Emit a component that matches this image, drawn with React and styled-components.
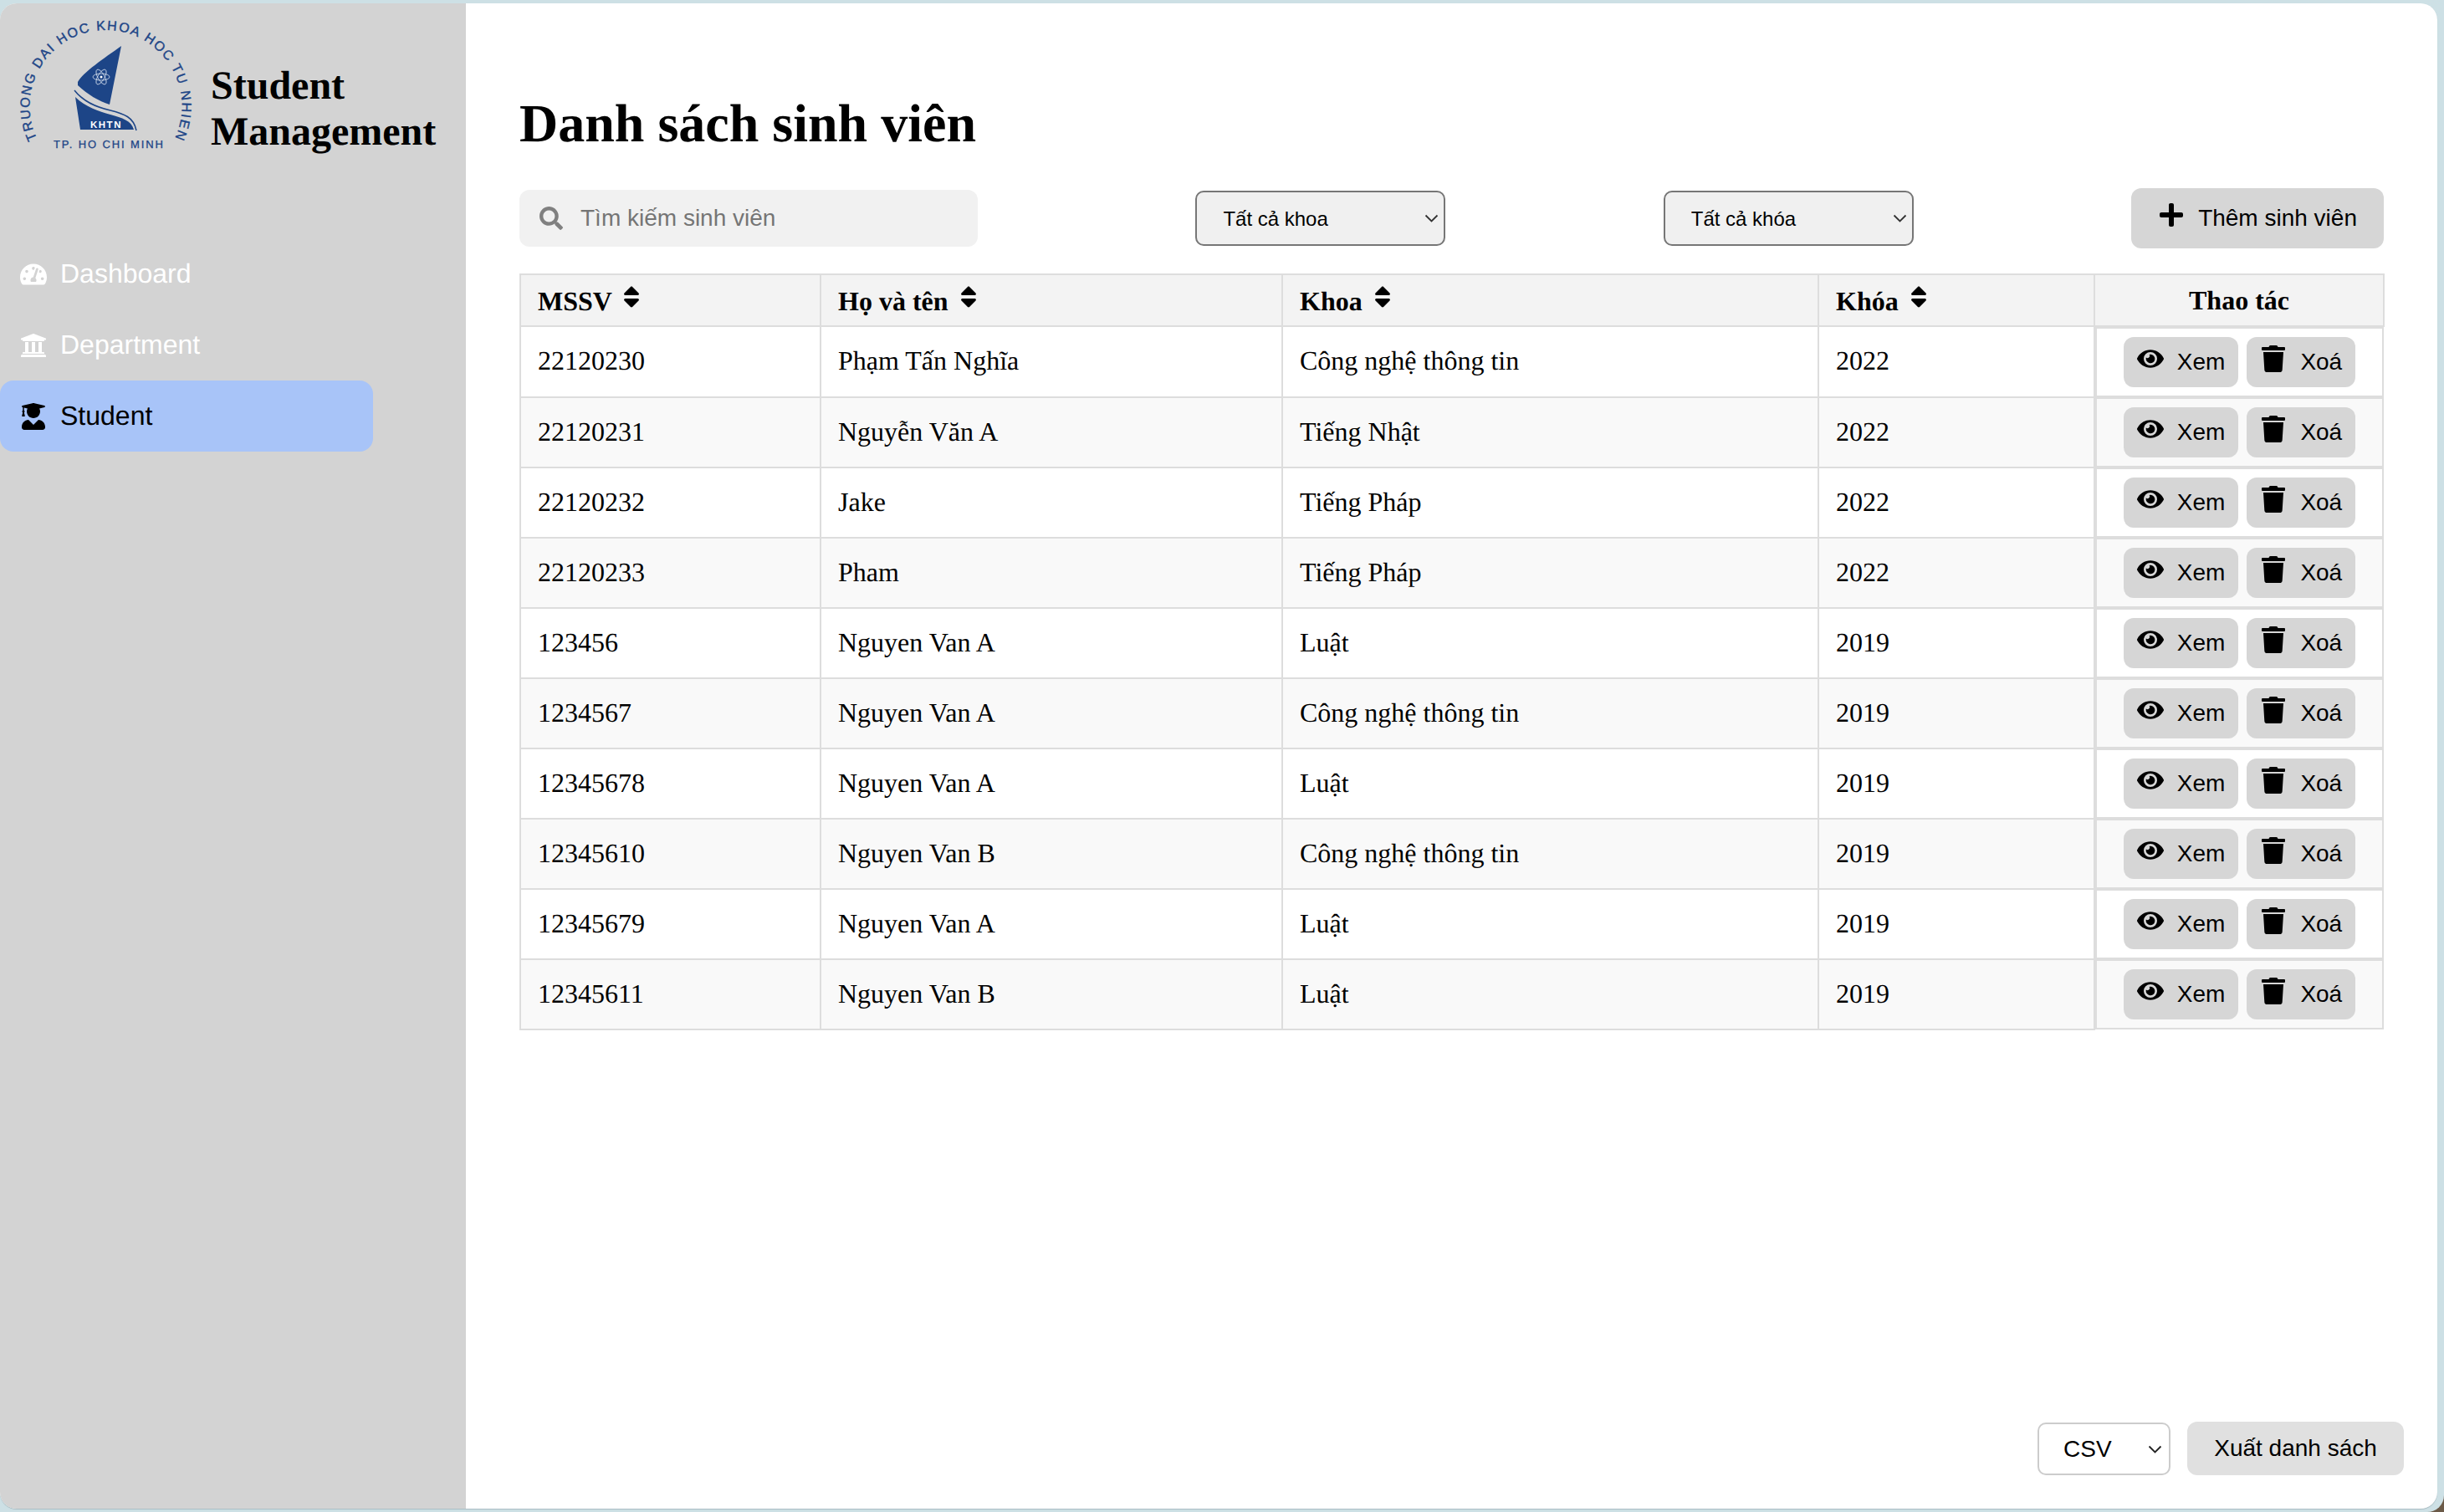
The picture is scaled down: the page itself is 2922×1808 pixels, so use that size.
import React from 'react';
import styled, { createGlobalStyle } from 'styled-components';
import {
  FaTachometerAlt,
  FaUniversity,
  FaUserGraduate,
  FaSearch,
  FaPlus,
  FaSort,
  FaEye,
  FaTrash,
} from 'react-icons/fa';

const chevron = (color) =>
  `url("data:image/svg+xml,%3Csvg xmlns='http://www.w3.org/2000/svg' width='17' height='10' viewBox='0 0 17 10'%3E%3Cpath d='M1.5 1.5 8.5 8.5 15.5 1.5' fill='none' stroke='${color}' stroke-width='1.8'/%3E%3C/svg%3E")`;

const GlobalStyle = createGlobalStyle`
  html, body {
    margin: 0;
    background: #6b5a48;
  }
  * {
    box-sizing: border-box;
  }
`;

const Frame = styled.div`
  height: 100vh;
  padding: 4px 8px 4px 0;
  background: #cde0e5;
  border-bottom-right-radius: 20px;
  font-family: "Liberation Sans", Arial, sans-serif;
  text-rendering: geometricPrecision;
`;

const Window = styled.div`
  display: flex;
  height: 100%;
  background: #fff;
  border-radius: 20px;
  overflow: hidden;
  box-shadow: 0 1px 1px #a9bcc2;
`;

const Sidebar = styled.aside`
  flex: 0 0 557px;
  background: #d3d3d3;
`;

const Brand = styled.div`
  display: flex;
  align-items: flex-start;
  gap: 12px;
  height: 281px;
  padding: 6px 0 0 10px;
`;

const BrandName = styled.div`
  margin-top: 65px;
  font-family: "Liberation Serif", "Times New Roman", serif;
  font-size: 48px;
  font-weight: bold;
  color: #000;
`;

const Nav = styled.nav`
  display: flex;
  flex-direction: column;
`;

const NavItem = styled.a`
  display: flex;
  align-items: center;
  gap: 16px;
  width: 446px;
  height: 85px;
  padding-left: 24px;
  border-radius: 16px;
  font-size: 32px;
  color: ${(p) => (p.$active ? '#000' : '#fff')};
  background: ${(p) => (p.$active ? '#a8c4f8' : 'transparent')};
`;

const Main = styled.main`
  flex: 1;
  display: flex;
  flex-direction: column;
  min-width: 0;
`;

const Content = styled.div`
  padding: 107px 64px 0;
`;

const Title = styled.h1`
  margin: 0 0 40px;
  font-family: "Liberation Serif", "Times New Roman", serif;
  font-size: 64px;
  font-weight: bold;
  color: #000;
`;

const Toolbar = styled.div`
  display: flex;
  justify-content: space-between;
  align-items: center;
  height: 72px;
  margin-bottom: 30px;
`;

const SearchBox = styled.label`
  display: flex;
  align-items: center;
  gap: 21px;
  width: 548px;
  height: 68px;
  padding-left: 24px;
  border-radius: 12px;
  background: #f1f1f1;
  color: #808080;
  font-size: 28px;
`;

const SearchInput = styled.input`
  flex: 1;
  min-width: 0;
  padding: 0;
  border: none;
  outline: none;
  background: transparent;
  font-family: inherit;
  font-size: 28px;

  &::placeholder {
    color: #757575;
  }
`;

const FilterSelect = styled.select`
  appearance: none;
  width: 299px;
  height: 66px;
  padding-left: 31px;
  border: 2px solid #767676;
  border-radius: 10px;
  background: #f0f0f0 ${chevron('%23333')} no-repeat right 6px center;
  font-family: inherit;
  font-size: 24px;
  color: #000;
`;

const AddButton = styled.button`
  display: flex;
  align-items: center;
  gap: 16px;
  height: 72px;
  padding: 0 32px;
  border: none;
  border-radius: 12px;
  background: #d6d6d6;
  font-family: inherit;
  font-size: 28px;
  color: #000;
`;

const ButtonIcon = styled.span`
  display: flex;
  margin-bottom: 8px;
  font-size: 32px;
`;

const Table = styled.table`
  width: calc(100% - 1px);
  table-layout: fixed;
  border-collapse: collapse;
  font-family: "Liberation Serif", "Times New Roman", serif;
  font-size: 32px;
  color: #000;
`;

const Th = styled.th`
  width: ${(p) => p.$width}px;
  padding: 10px 20px;
  border: 2px solid #ddd;
  background: #f3f3f3;
  text-align: ${(p) => (p.$center ? 'center' : 'left')};

  svg {
    font-size: 32px;
  }
`;

const Row = styled.tr`
  background: ${(p) => (p.$even ? '#f9f9f9' : '#fff')};
`;

const Td = styled.td`
  padding: 0 20px 2px;
  border: 2px solid #ddd;
`;

const ActionCell = styled.td`
  display: flex;
  justify-content: center;
  gap: 10px;
  padding: 10px;
  border: 2px solid #ddd;
`;

const ActionButton = styled.button`
  display: flex;
  align-items: center;
  gap: 16px;
  height: 60px;
  padding: 0 16px;
  border: none;
  border-radius: 12px;
  background: #d6d6d6;
  font-family: "Liberation Sans", Arial, sans-serif;
  font-size: 28px;
  color: #000;
`;

const Footer = styled.div`
  display: flex;
  justify-content: flex-end;
  align-items: flex-end;
  gap: 20px;
  margin-top: auto;
  padding: 0 40px 40px 0;
`;

const FormatSelect = styled.select`
  appearance: none;
  width: 159px;
  height: 63px;
  padding-left: 29px;
  border: 2px solid #ccc;
  border-radius: 10px;
  background: #fff ${chevron('%23222')} no-repeat right 8px center;
  font-family: inherit;
  font-size: 28px;
  color: #000;
`;

const ExportButton = styled.button`
  width: 259px;
  height: 64px;
  border: none;
  border-radius: 12px;
  background: #e0e0e0;
  font-family: inherit;
  font-size: 28px;
  color: #000;
`;

const Logo = () => (
  <svg width="230" height="180" viewBox="0 0 230 180" fill="#1d4587" fontFamily="Liberation Sans, Arial, sans-serif">
    <defs>
      <path id="logo-arc" d="M34.3 156 A91 91 0 1 1 198.7 156" />
    </defs>
    <text fontSize="16" letterSpacing="1.8" stroke="#1d4587" strokeWidth="0.4">
      <textPath href="#logo-arc">TRUONG DAI HOC KHOA HOC TU NHIEN</textPath>
    </text>
    <text x="54" y="167" fontSize="13" stroke="#1d4587" strokeWidth="0.3" textLength="131">
      TP. HO CHI MINH
    </text>
    <path d="M135 45 C114 60 90 76 83 88 L83 92 C95 103 108 111 121 115 Z" />
    <path d="M79 98 C90 112 105 118 122 122 C138 126 150 130 153 146" fill="none" stroke="#1d4587" strokeWidth="1.5" />
    <path d="M80 106 C92 118 108 123 122 127 C136 131 147 134 150 145 L86 145 Z" />
    <g fill="none" stroke="#d5dfee" strokeWidth="0.8">
      <ellipse cx="111" cy="82" rx="10" ry="4" />
      <ellipse cx="111" cy="82" rx="10" ry="4" transform="rotate(60 111 82)" />
      <ellipse cx="111" cy="82" rx="10" ry="4" transform="rotate(120 111 82)" />
    </g>
    <circle cx="111" cy="82" r="1.5" fill="#fff" />
    <text x="98" y="143" fontSize="11.5" fontWeight="bold" fill="#fff" letterSpacing="1.5">
      KHTN
    </text>
  </svg>
);

const columns = [
  { label: 'MSSV', width: 359 },
  { label: 'Họ và tên', width: 552 },
  { label: 'Khoa', width: 641 },
  { label: 'Khóa', width: 330 },
];

const students = [
  ['22120230', 'Phạm Tấn Nghĩa', 'Công nghệ thông tin', '2022'],
  ['22120231', 'Nguyễn Văn A', 'Tiếng Nhật', '2022'],
  ['22120232', 'Jake', 'Tiếng Pháp', '2022'],
  ['22120233', 'Pham', 'Tiếng Pháp', '2022'],
  ['123456', 'Nguyen Van A', 'Luật', '2019'],
  ['1234567', 'Nguyen Van A', 'Công nghệ thông tin', '2019'],
  ['12345678', 'Nguyen Van A', 'Luật', '2019'],
  ['12345610', 'Nguyen Van B', 'Công nghệ thông tin', '2019'],
  ['12345679', 'Nguyen Van A', 'Luật', '2019'],
  ['12345611', 'Nguyen Van B', 'Luật', '2019'],
];

export default function App() {
  return (
    <Frame>
      <GlobalStyle />
      <Window>
        <Sidebar>
          <Brand>
            <Logo />
            <BrandName>
              Student
              <br />
              Management
            </BrandName>
          </Brand>
          <Nav>
            <NavItem>
              <FaTachometerAlt />
              Dashboard
            </NavItem>
            <NavItem>
              <FaUniversity />
              Department
            </NavItem>
            <NavItem $active>
              <FaUserGraduate />
              Student
            </NavItem>
          </Nav>
        </Sidebar>
        <Main>
          <Content>
            <Title>Danh sách sinh viên</Title>
            <Toolbar>
              <SearchBox>
                <FaSearch />
                <SearchInput placeholder="Tìm kiếm sinh viên" />
              </SearchBox>
              <FilterSelect>
                <option>Tất cả khoa</option>
              </FilterSelect>
              <FilterSelect>
                <option>Tất cả khóa</option>
              </FilterSelect>
              <AddButton>
                <ButtonIcon>
                  <FaPlus />
                </ButtonIcon>
                Thêm sinh viên
              </AddButton>
            </Toolbar>
            <Table>
              <thead>
                <tr>
                  {columns.map((col) => (
                    <Th key={col.label} $width={col.width}>
                      {col.label}
                      {' '}
                      <FaSort />
                    </Th>
                  ))}
                  <Th $width={346} $center>Thao tác</Th>
                </tr>
              </thead>
              <tbody>
                {students.map((s, i) => (
                  <Row key={s[0]} $even={i % 2 === 1}>
                    {s.map((value, j) => (
                      <Td key={j}>{value}</Td>
                    ))}
                    <ActionCell>
                      <ActionButton>
                        <ButtonIcon>
                          <FaEye />
                        </ButtonIcon>
                        Xem
                      </ActionButton>
                      <ActionButton>
                        <ButtonIcon>
                          <FaTrash />
                        </ButtonIcon>
                        Xoá
                      </ActionButton>
                    </ActionCell>
                  </Row>
                ))}
              </tbody>
            </Table>
          </Content>
          <Footer>
            <FormatSelect>
              <option>CSV</option>
            </FormatSelect>
            <ExportButton>Xuất danh sách</ExportButton>
          </Footer>
        </Main>
      </Window>
    </Frame>
  );
}
